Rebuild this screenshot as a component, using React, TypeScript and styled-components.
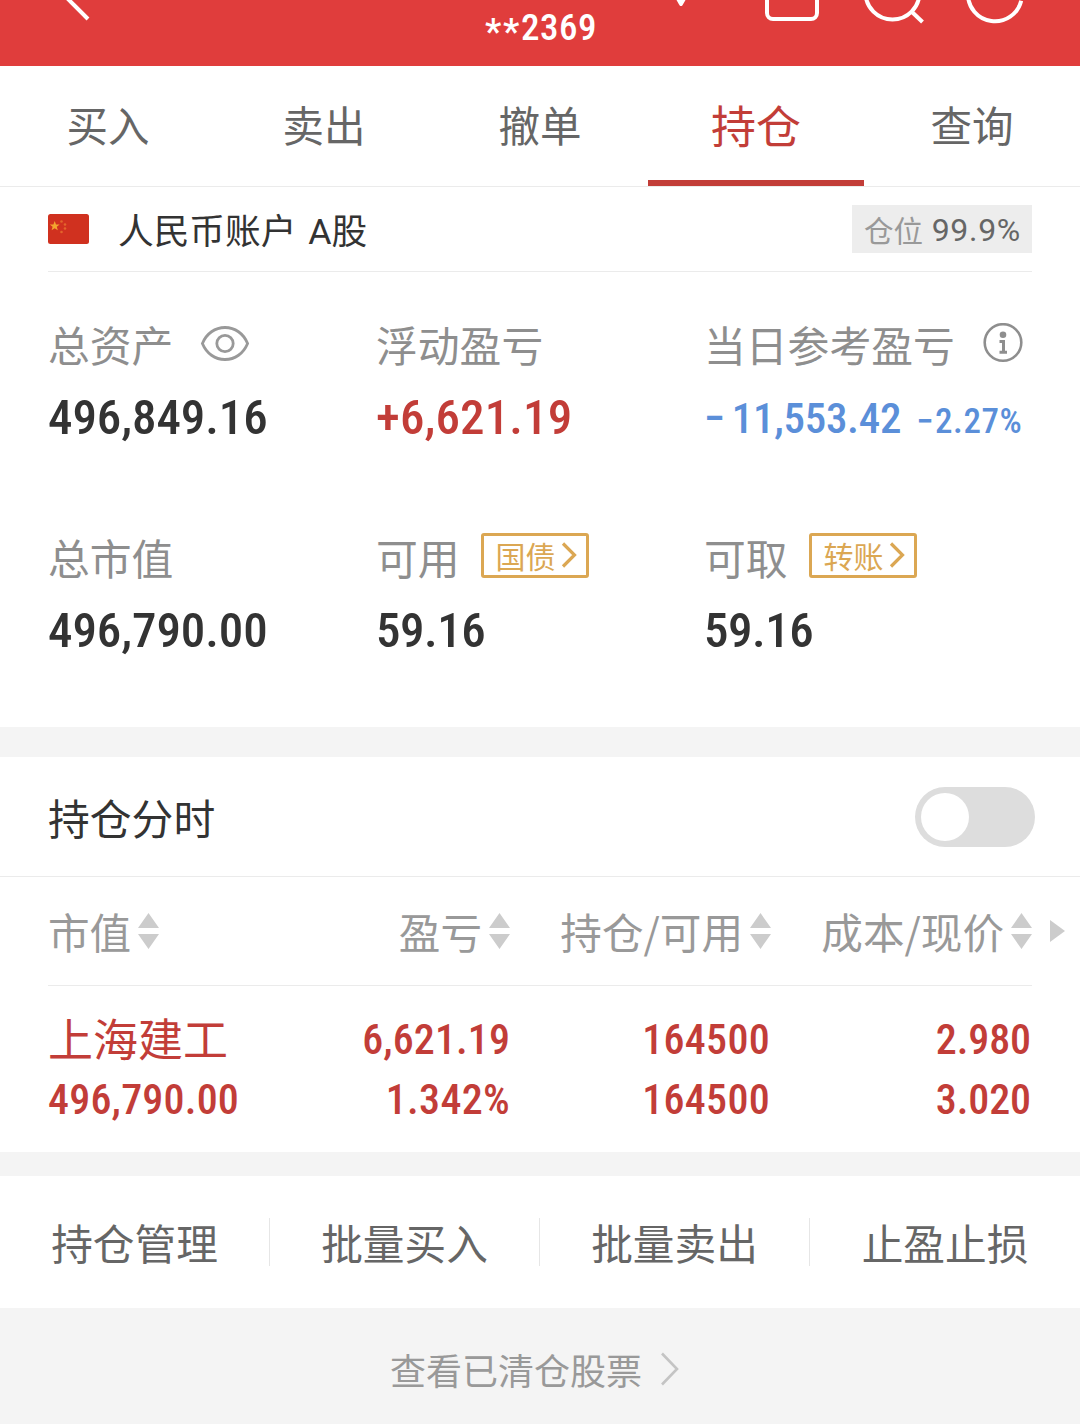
import React from "react";
import styled, { createGlobalStyle } from "styled-components";

const red = "#c23d38";

const GlobalStyle = createGlobalStyle`
  * { box-sizing: border-box; }
  body {
    margin: 0;
    background: #f4f4f4;
    color: #333;
    font-family: "Noto Sans CJK SC", sans-serif;
    -webkit-font-smoothing: antialiased;
  }
`;

const Page = styled.div`
  width: 1080px;
  height: 1424px;
  overflow: hidden;
  display: flex;
  flex-direction: column;
  background: #f4f4f4;
`;

const Num = styled.span<{ $size?: number; $color?: string; $weight?: number; $spacing?: number }>`
  font-family: Roboto, sans-serif;
  font-stretch: 75%;
  font-weight: ${(p) => p.$weight ?? 480};
  font-size: ${(p) => p.$size ?? 49}px;
  letter-spacing: ${(p) => p.$spacing ?? -0.1}px;
  color: ${(p) => p.$color ?? "#333"};
  line-height: 1;
  white-space: nowrap;
`;

const Minus = styled.span<{ $gap: number }>`
  margin-right: ${(p) => p.$gap}px;
`;

const Mask = styled.span`
  vertical-align: -4px;
  letter-spacing: 1.6px;
`;

/* Header */
const Header = styled.header`
  height: 66px;
  flex: none;
  background: #e03d3c;
  display: grid;
  grid-template-columns: 485px 112px 1fr;
`;

const Account = styled.div`
  padding-top: 9px;
  text-align: center;
  line-height: 1;
`;

const HeaderIcons = styled.div`
  display: flex;
  padding-left: 75px;
`;

const Icon = styled.svg<{ $ml?: number }>`
  display: block;
  flex: none;
  margin-left: ${(p) => p.$ml ?? 0}px;
  fill: none;
`;

/* Tabs */
const Tabs = styled.nav`
  flex: none;
  height: 121px;
  display: grid;
  grid-template-columns: repeat(5, 1fr);
  background: #fff;
  border-bottom: 1px solid #ebebeb;
`;

const Tab = styled.div<{ $active?: boolean }>`
  text-align: center;
  font-size: ${(p) => (p.$active ? 45 : 41.5)}px;
  line-height: 117px;
  height: 120px;
  color: ${(p) => (p.$active ? red : "#666")};
  border-bottom: ${(p) => (p.$active ? `6px solid ${red}` : "none")};
`;

/* Account summary */
const Summary = styled.section`
  flex: none;
  height: 540px;
  padding: 0 48px;
  background: #fff;
`;

const AccountRow = styled.div`
  height: 85px;
  display: flex;
  align-items: center;
  border-bottom: 1px solid #ebebeb;
`;

const AccountName = styled.div`
  flex: 1;
  margin-left: 29px;
  font-family: Roboto, "Noto Sans CJK SC", sans-serif;
  font-size: 35.7px;
  line-height: 50px;
  word-spacing: 3px;
  padding-top: 6px;
`;

const Position = styled.div`
  width: 180px;
  height: 48px;
  padding: 0 11px 0 12px;
  display: flex;
  align-items: center;
  justify-content: space-between;
  background: #ededed;
  font-size: 29.5px;
  line-height: 48px;
  color: #999;
`;

const PositionRate = styled.span`
  font-family: Roboto, sans-serif;
  font-size: 32px;
  letter-spacing: 0.7px;
  padding-top: 2px;
  color: #666;
`;

const Stats = styled.div`
  display: grid;
  grid-template-columns: 328px 328px 1fr;
  grid-auto-rows: 213px;
  padding-top: 42px;
`;

const Label = styled.div`
  height: 60px;
  display: flex;
  align-items: center;
  font-size: 41.8px;
  line-height: 58px;
  color: #8e8e8e;
  white-space: nowrap;
`;

const Value = styled.div`
  height: 60px;
  margin-top: 19px;
  display: flex;
  align-items: baseline;
  gap: 15px;
  line-height: 60px;
`;

const DayValue = styled(Value)`
  margin-top: 23px;
`;

const LinkTag = styled.span`
  width: 108px;
  height: 45px;
  margin-left: 21px;
  margin-bottom: 4px;
  padding-left: 12px;
  display: flex;
  align-items: center;
  gap: 5px;
  border: 3px solid #dba753;
  border-radius: 3px;
  color: #dba753;
  font-size: 30px;
  line-height: 38px;
`;

/* Holdings */
const Gap = styled.div<{ $h: number }>`
  flex: none;
  height: ${(p) => p.$h}px;
`;

const ChartRow = styled.section`
  flex: none;
  height: 120px;
  padding: 0 45px 0 48px;
  display: flex;
  align-items: center;
  justify-content: space-between;
  background: #fff;
  border-bottom: 1px solid #ebebeb;
  font-size: 41.8px;
  line-height: 60px;
`;

const Toggle = styled.div`
  width: 120px;
  height: 60px;
  padding: 6px;
  border-radius: 30px;
  background: #ddd;
`;

const Knob = styled.div`
  width: 48px;
  height: 48px;
  border-radius: 50%;
  background: #fff;
`;

const Table = styled.section`
  flex: none;
  height: 275px;
  background: #fff;
  padding: 0 15px 0 48px;
`;

const HeadRow = styled.div`
  height: 108px;
  display: grid;
  grid-template-columns: 190px 272px 261px 261px 1fr;
  align-items: center;
  font-size: 41.6px;
  color: #999;
  line-height: 60px;
`;

const HeadCell = styled.div<{ $left?: boolean }>`
  display: flex;
  align-items: center;
  justify-content: ${(p) => (p.$left ? "flex-start" : "flex-end")};
  gap: 7px;
  white-space: nowrap;
`;

const Divider = styled.div`
  width: 984px;
  height: 1px;
  background: #ebebeb;
`;

const Holding = styled.div`
  display: grid;
  grid-template-columns: 190px 272px 260px 261px;
  padding-top: 23px;
`;

const Cell = styled.div<{ $name?: boolean; $left?: boolean }>`
  height: 60px;
  line-height: 60px;
  padding-top: ${(p) => (p.$name ? 0 : 8)}px;
  text-align: ${(p) => (p.$left ? "left" : "right")};
  white-space: nowrap;
  color: ${red};
`;

const StockName = styled.span`
  display: block;
  font-size: 45px;
  line-height: 57px;
`;

const Actions = styled.section`
  flex: none;
  height: 132px;
  display: grid;
  grid-template-columns: repeat(4, 270px);
  align-items: center;
  background: #fff;
`;

const Action = styled.div<{ $last?: boolean }>`
  height: 48px;
  text-align: center;
  font-size: 41.7px;
  line-height: 49px;
  color: #666;
  border-right: ${(p) => (p.$last ? "none" : "1px solid #e6e6e6")};
`;

const Footer = styled.footer`
  flex: 1;
  padding: 6px 0 0 390px;
  display: flex;
  align-items: center;
  font-size: 36px;
  line-height: 60px;
  color: #999;
`;

const Flag = () => (
  <Icon width="41" height="30" viewBox="0 0 41 30">
    <rect width="41" height="30" rx="2.5" fill="#d0311f" />
    <path d="M6.700 7l1.300 3.400h3.600l-2.800 2.300 1 3.500-3.100-2-3.100 2 1-3.500-2.800-2.300h3.600z" fill="#f3a52f" />
    <g fill="#e3652b">
      <circle cx="13.500" cy="7.500" r="1.300" />
      <circle cx="17" cy="10.500" r="1.300" />
      <circle cx="17" cy="14.500" r="1.300" />
      <circle cx="13.500" cy="18" r="1.300" />
    </g>
  </Icon>
);

const Eye = () => (
  <Icon $ml={27} width="50" height="42" viewBox="0 0 50 42" stroke="#999" strokeWidth="2.800">
    <path d="M2.400 20.500C6.500 10.500 15 4.500 25 4.500s18.500 6 22.600 16C43.500 30.500 35 36.500 25 36.500S6.500 30.500 2.400 20.500z" />
    <circle cx="25" cy="20.500" r="8.200" />
  </Icon>
);

const Info = () => (
  <Icon $ml={28} width="40" height="42" viewBox="0 0 40 42">
    <circle cx="20" cy="19.500" r="18.300" stroke="#8e8e8e" strokeWidth="2.600" />
    <circle cx="20" cy="11.800" r="3.300" fill="#8e8e8e" />
    <path d="M16.500 18.500h4v11M16.500 29.300h7.500" stroke="#8e8e8e" strokeWidth="3" />
  </Icon>
);

const TagArrow = () => (
  <Icon width="16" height="26" viewBox="0 0 16 26" stroke="#dba753" strokeWidth="3.200">
    <path d="M2 1.500L13.500 13 2 24.500" />
  </Icon>
);

const Sort = () => (
  <Icon width="21" height="38" viewBox="0 0 21 38">
    <path d="M0 16L10.500 1 21 16zM0 22h21L10.500 37z" fill="#ccc" />
  </Icon>
);

const tabs = ["买入", "卖出", "撤单", "持仓", "查询"];
const actions = ["持仓管理", "批量买入", "批量卖出", "止盈止损"];
const columns = ["市值", "盈亏", "持仓/可用", "成本/现价"];

export default function App() {
  return (
    <Page>
      <GlobalStyle />
      <Header>
        <Icon width="100" height="30" viewBox="0 0 100 30" stroke="#fff" strokeWidth="4">
          <path d="M62 -7L88 19" />
        </Icon>
        <Account>
          <Num $size={37} $color="#fff" $spacing={0.5} $weight={500}><Mask>**</Mask>2369</Num>
        </Account>
        <HeaderIcons>
          <Icon width="20" height="10" viewBox="0 0 20 10">
            <path d="M1 -6h16L10.500 5.200a2 2 0 0 1-3 0z" fill="#fff" />
          </Icon>
          <Icon $ml={73} width="54" height="30" viewBox="0 0 54 30" stroke="#fff" strokeWidth="4">
            <rect x="2" y="-30" width="50" height="49" rx="6" />
          </Icon>
          <Icon $ml={45} width="62" height="30" viewBox="0 0 62 30" stroke="#fff" strokeWidth="4">
            <circle cx="28.500" cy="-7.500" r="27" />
            <path d="M48 12L58.500 22" />
          </Icon>
          <Icon $ml={40} width="62" height="30" viewBox="0 0 62 30" stroke="#fff" strokeWidth="4">
            <path d="M55.200 0.800A27 27 0 0 1 2 -6.500" />
          </Icon>
        </HeaderIcons>
      </Header>

      <Tabs>
        {tabs.map((t) => (
          <Tab key={t} $active={t === "持仓"}>{t}</Tab>
        ))}
      </Tabs>

      <Summary>
        <AccountRow>
          <Flag />
          <AccountName>人民币账户 A股</AccountName>
          <Position>
            仓位<PositionRate>99.9%</PositionRate>
          </Position>
        </AccountRow>
        <Stats>
          <div>
            <Label>总资产<Eye /></Label>
            <Value><Num>496,849.16</Num></Value>
          </div>
          <div>
            <Label>浮动盈亏</Label>
            <Value><Num $color={red} $spacing={0.1}>+6,621.19</Num></Value>
          </div>
          <div>
            <Label>当日参考盈亏<Info /></Label>
            <DayValue>
              <Num $size={43} $color="#5b8fd9" $spacing={-0.3}><Minus $gap={7}>−</Minus>11,553.42</Num>
              <Num $size={35} $color="#5b8fd9" $spacing={0.6}><Minus $gap={1}>−</Minus>2.27%</Num>
            </DayValue>
          </div>
          <div>
            <Label>总市值</Label>
            <Value><Num>496,790.00</Num></Value>
          </div>
          <div>
            <Label>可用<LinkTag>国债<TagArrow /></LinkTag></Label>
            <Value><Num $spacing={-0.5}>59.16</Num></Value>
          </div>
          <div>
            <Label>可取<LinkTag>转账<TagArrow /></LinkTag></Label>
            <Value><Num $spacing={-0.5}>59.16</Num></Value>
          </div>
        </Stats>
      </Summary>

      <Gap $h={30} />

      <ChartRow>
        持仓分时
        <Toggle><Knob /></Toggle>
      </ChartRow>

      <Table>
        <HeadRow>
          {columns.map((c, i) => (
            <HeadCell key={c} $left={i === 0}>{c}<Sort /></HeadCell>
          ))}
          <HeadCell>
            <Icon width="15" height="22" viewBox="0 0 15 22">
              <path d="M0 0l15 11L0 22z" fill="#ccc" />
            </Icon>
          </HeadCell>
        </HeadRow>
        <Divider />
        <Holding>
          <Cell $left $name><StockName>上海建工</StockName></Cell>
          <Cell><Num $size={42} $color={red} $spacing={0.1}>6,621.19</Num></Cell>
          <Cell><Num $size={42} $color={red} $spacing={0.3}>164500</Num></Cell>
          <Cell><Num $size={42} $color={red}>2.980</Num></Cell>
          <Cell $left><Num $size={42} $color={red} $spacing={0.2}>496,790.00</Num></Cell>
          <Cell><Num $size={42} $color={red} $spacing={0.3}>1.342%</Num></Cell>
          <Cell><Num $size={42} $color={red} $spacing={0.3}>164500</Num></Cell>
          <Cell><Num $size={42} $color={red}>3.020</Num></Cell>
        </Holding>
      </Table>

      <Gap $h={24} />

      <Actions>
        {actions.map((a, i) => (
          <Action key={a} $last={i === 3}>{a}</Action>
        ))}
      </Actions>

      <Footer>
        查看已清仓股票
        <Icon $ml={18} width="20" height="34" viewBox="0 0 20 34" stroke="#c4c4c4" strokeWidth="2.600">
          <path d="M2 1.500L17 17 2 32.500" />
        </Icon>
      </Footer>
    </Page>
  );
}
